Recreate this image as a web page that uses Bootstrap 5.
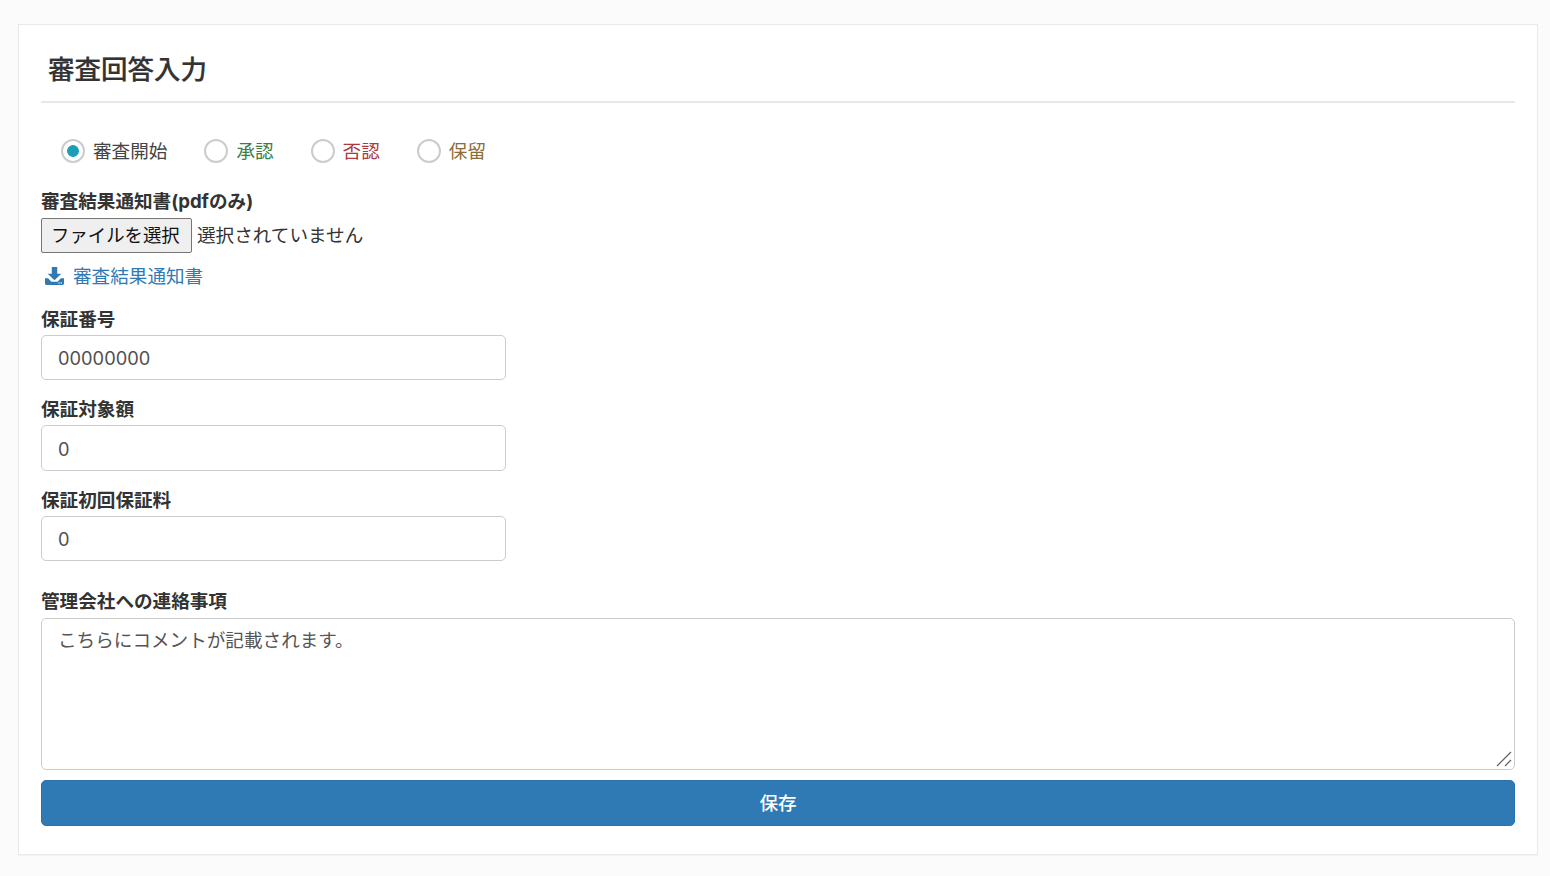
<!DOCTYPE html>
<html lang="ja">
<head>
<meta charset="utf-8">
<title>審査回答入力</title>
<link href="https://cdn.jsdelivr.net/npm/bootstrap@5.3.0/dist/css/bootstrap.min.css" rel="stylesheet">
<style>
html,body{height:100%}
body{background:#fbfbfc;font-family:Inter,"Noto Sans CJK JP",sans-serif;color:#333;padding:24px 12px 0 18px;font-size:18.6px}
.sheet{border:1px solid #e8e9ec;border-radius:0;background:#fff;padding:22px;height:831px;box-shadow:0 1px 1px rgba(0,0,0,.03)}
.sheet-title{font-size:26.5px;font-weight:500;color:#333;line-height:1.3;margin:5px 0 0;padding:0 7px 15px;border-bottom:2px solid #e6e8eb;-webkit-text-stroke:.2px #333}
.radio-row{padding:0 20px;margin-top:33px;height:30px;gap:37px}
.radio-item{display:flex;align-items:center;margin:0;padding:0;gap:8px;min-height:0}
.radio-item .form-check-input{width:24px;height:24px;margin:0;float:none;border:2px solid #ccc;background-color:#fff;background-image:none;flex:none}
.radio-item .form-check-input:checked{border-color:#ccc;background-color:#fff;background-image:radial-gradient(circle,#1c9db8 0,#1c9db8 5.5px,transparent 6.2px)}
.radio-item .form-check-input:focus{box-shadow:none}
.radio-item .form-check-label{line-height:1}
.tone-wait{color:#444}.tone-ok{color:#3c7d45}.tone-ng{color:#ad3a40}.tone-hold{color:#8a6d3b}
.field-label{display:block;font-weight:700;line-height:24px;margin:0 0 4px;color:#333}
.field-label.roomy{margin-bottom:5px}
.file-row{gap:5px;height:35px}
.file-btn{background:#efefef;border:1px solid #767676;border-radius:2px;color:#111;font-size:18.4px;line-height:1;padding:0 8px 2px 9px;height:35px;width:151px;white-space:nowrap;text-align:left}
.dl-link{color:#2f79b5;text-decoration:none;gap:9px;padding-left:4px;margin-top:11px;line-height:24px}
.dl-link svg{flex:none}
.block-first{margin-top:23px}
.block-a{margin-top:13.500px}
.block-b{margin-top:17px}
.block-c{margin-top:27.500px}
.num-input.form-control{width:465px;height:45.500px;border-color:#ccc;border-radius:5px;font-size:18.300px;color:#505050;padding:1px 16px 0}
.note-wrap{height:152px}
.note-input.form-control{height:100%;border-color:#ccc;border-radius:5px;font-size:18.6px;color:#555;padding:8px 16px;resize:none}
.note-grip{position:absolute;right:3px;bottom:3px;pointer-events:none}
.save-btn.btn{background:#2f79b5;border:1px solid #2c72ab;color:#fff;font-size:18.6px;height:46px;border-radius:5px;padding:2px 0 0;margin-top:10px;font-weight:500}
</style>
</head>
<body>
<div class="sheet">
  <h1 class="sheet-title">審査回答入力</h1>
  <form>
    <div class="d-flex align-items-center radio-row">
      <div class="form-check radio-item"><input class="form-check-input" type="radio" name="st" id="r1" checked><label class="form-check-label tone-wait" for="r1">審査開始</label></div>
      <div class="form-check radio-item"><input class="form-check-input" type="radio" name="st" id="r2"><label class="form-check-label tone-ok" for="r2">承認</label></div>
      <div class="form-check radio-item"><input class="form-check-input" type="radio" name="st" id="r3"><label class="form-check-label tone-ng" for="r3">否認</label></div>
      <div class="form-check radio-item"><input class="form-check-input" type="radio" name="st" id="r4"><label class="form-check-label tone-hold" for="r4">保留</label></div>
    </div>
    <div class="block-first">
      <label class="field-label roomy">審査結果通知書(pdfのみ)</label>
      <div class="d-flex align-items-center file-row">
        <button type="button" class="file-btn">ファイルを選択</button>
        <span>選択されていません</span>
      </div>
      <a href="#" class="dl-link d-inline-flex align-items-center">
        <svg width="19" height="18" viewBox="0 0 21 19" preserveAspectRatio="none"><path fill="#2f79b5" d="M7.500 0h6v7h4.500l-7.500 7L3 7h4.500zM0 12h3.500l3.500 3.500h7l3.500-3.500H21v5.500a1.500 1.500 0 0 1-1.500 1.500h-18A1.500 1.500 0 0 1 0 17.500z"/><circle cx="15.500" cy="16.800" r=".8" fill="#fff"/><circle cx="18" cy="16.800" r=".8" fill="#fff"/></svg>
        <span>審査結果通知書</span>
      </a>
    </div>
    <div class="block-a">
      <label class="field-label">保証番号</label>
      <input class="form-control num-input" type="text" value="00000000">
    </div>
    <div class="block-b">
      <label class="field-label">保証対象額</label>
      <input class="form-control num-input" type="text" value="0">
    </div>
    <div class="block-b">
      <label class="field-label">保証初回保証料</label>
      <input class="form-control num-input" type="text" value="0">
    </div>
    <div class="block-c">
      <label class="field-label roomy">管理会社への連絡事項</label>
      <div class="note-wrap position-relative">
        <textarea class="form-control note-input">こちらにコメントが記載されます。</textarea>
        <svg class="note-grip" width="16" height="16" viewBox="0 0 16 16"><path d="M1 15 15 1M9 15l6-6" stroke="#666" stroke-width="1.300" fill="none"/></svg>
      </div>
    </div>
    <button type="button" class="btn save-btn w-100">保存</button>
  </form>
</div>
<script src="https://cdn.jsdelivr.net/npm/bootstrap@5.3.0/dist/js/bootstrap.bundle.min.js"></script>
</body>
</html>
